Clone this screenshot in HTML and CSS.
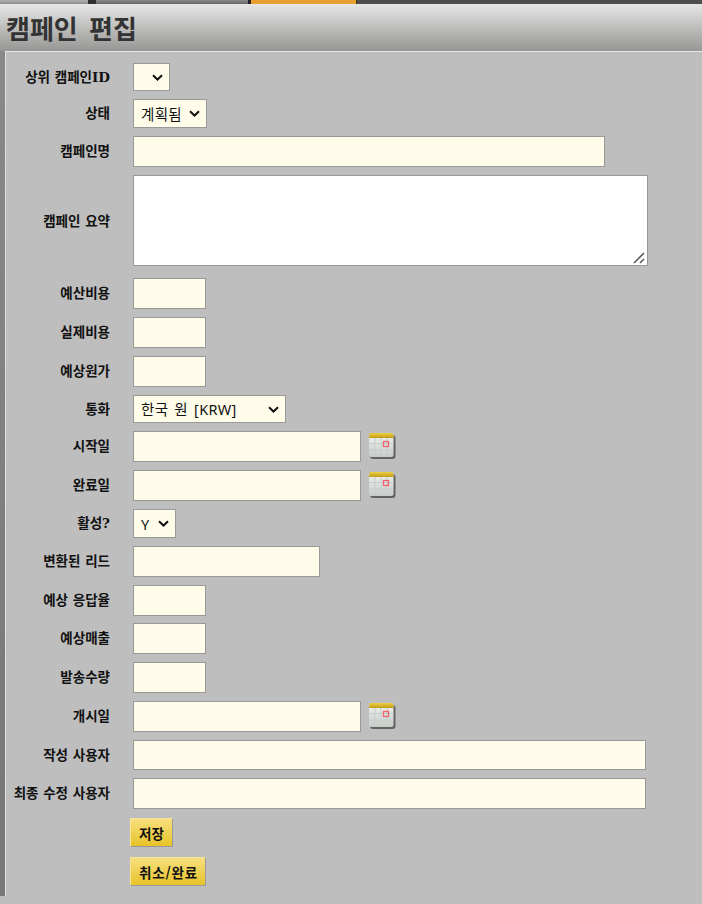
FILE: index.html
```html
<!DOCTYPE html>
<html lang="ko">
<head>
    <meta charset="UTF-8">
    <meta name="viewport" content="width=device-width, initial-scale=1.0">
    <title>캠페인 편집</title>
    <link rel="stylesheet" href="styles.css">
</head>
<body>
    <div id="top-strip">
        <div class="tab tab-first"></div>
        <div class="tab tab-second"></div>
        <div class="tab tab-active"></div>
    </div>
    <h1 id="page-title">캠페인 편집</h1>
    <form id="edit-form">
        <label class="lbl">상위 캠페인ID</label>
        <div class="field"><select class="sel w-37"><option></option></select></div>

        <label class="lbl">상태</label>
        <div class="field"><select class="sel w-74 h-29"><option>계획됨</option></select></div>

        <label class="lbl">캠페인명</label>
        <div class="field"><input class="txt w-472" type="text"></div>

        <label class="lbl lbl-area">캠페인 요약</label>
        <div class="field area-wrap">
            <textarea class="area"></textarea>
            <svg class="grip" viewBox="0 0 12 12"><path d="M1 11 L11 1 M7 11 L11 7" stroke="#5a5a5a" stroke-width="1.6" fill="none"/></svg>
        </div>

        <label class="lbl">예산비용</label>
        <div class="field"><input class="txt w-73" type="text"></div>

        <label class="lbl">실제비용</label>
        <div class="field"><input class="txt w-73" type="text"></div>

        <label class="lbl">예상원가</label>
        <div class="field"><input class="txt w-73" type="text"></div>

        <label class="lbl">통화</label>
        <div class="field"><select class="sel w-153"><option>한국 원 [KRW]</option></select></div>

        <label class="lbl">시작일</label>
        <div class="field">
            <input class="txt w-228" type="text">
            <svg class="cal" viewBox="0 1 28 28"><use href="#cal-icon"></use></svg>
        </div>

        <label class="lbl">완료일</label>
        <div class="field">
            <input class="txt w-228" type="text">
            <svg class="cal" viewBox="0 1 28 28"><use href="#cal-icon"></use></svg>
        </div>

        <label class="lbl">활성?</label>
        <div class="field"><select class="sel w-43 h-29"><option>Y</option></select></div>

        <label class="lbl">변환된 리드</label>
        <div class="field"><input class="txt w-187" type="text"></div>

        <label class="lbl tight">예상 응답율</label>
        <div class="field tight"><input class="txt w-73" type="text"></div>

        <label class="lbl">예상매출</label>
        <div class="field"><input class="txt w-73" type="text"></div>

        <label class="lbl">발송수량</label>
        <div class="field"><input class="txt w-73" type="text"></div>

        <label class="lbl">개시일</label>
        <div class="field">
            <input class="txt w-228" type="text">
            <svg class="cal" viewBox="0 1 28 28"><use href="#cal-icon"></use></svg>
        </div>

        <label class="lbl">작성 사용자</label>
        <div class="field"><input class="txt w-513 h-30" type="text"></div>

        <label class="lbl">최종 수정 사용자</label>
        <div class="field"><input class="txt w-513" type="text"></div>

        <div class="field btn-cell"><button class="btn" type="button">저장</button></div>
        <div class="field btn-cell btn-last"><button class="btn btn-wide h-28" type="button">취소/완료</button></div>
    </form>

    <svg class="defs" width="0" height="0">
        <defs>
            <linearGradient id="cal-top" x1="0" y1="0" x2="0" y2="1">
                <stop offset="0" stop-color="#f0d548"/>
                <stop offset="1" stop-color="#c49c18"/>
            </linearGradient>
            <linearGradient id="cal-body" x1="0" y1="0" x2="0" y2="1">
                <stop offset="0" stop-color="#eef2ef"/>
                <stop offset="1" stop-color="#c8ccc8"/>
            </linearGradient>
            <filter id="cal-blur"><feGaussianBlur stdDeviation="0.7"/></filter>
            <g id="cal-icon">
                <rect x="2" y="3" width="25.5" height="24" rx="3" fill="#4c4d46" opacity="0.8" filter="url(#cal-blur)"/>
                <rect x="1" y="2" width="24.5" height="23" rx="2" fill="url(#cal-body)"/>
                <path d="M1 5 Q1 0.5 4 0.5 H22.5 Q25.5 0.5 25.5 5 V6 H1Z" fill="url(#cal-top)"/>
                <path d="M7 6V25M13 6V25M19 6V25M1 11.5H25.5M1 18H25.5" stroke="#c3ceca" stroke-width="1" fill="none"/>
                <rect x="15.5" y="9.5" width="5" height="5" fill="none" stroke="#f2606e" stroke-width="1.3"/>
            </g>
        </defs>
    </svg>
</body>
</html>
```

FILE: styles.css
```css
html, body{
    margin: 0;
    padding: 0;
    height: 904px;
    overflow: hidden;
}

body{
    background: #bebebe linear-gradient(to bottom, #8a8a88, #777775) no-repeat;
    background-size: 100% 896px;
    font-family: "Noto Sans CJK KR", "Liberation Sans", sans-serif;
}

#top-strip{
    display: flex;
    height: 4px;
    background-color: #4e4e4e;
}

.tab{
    height: 4px;
}

.tab-first{
    width: 88px;
    background: linear-gradient(to bottom, #b0b0b0, #8c8c8c);
    border-right: 8px solid #2e2e2e;
}

.tab-second{
    width: 152px;
    background: linear-gradient(to bottom, #888888, #666666);
    border-right: 3px solid #222222;
}

.tab-active{
    width: 105px;
    background-color: #e8a030;
    border-right: 1px solid #4a3510;
}

#page-title{
    margin: 0;
    height: 47px;
    padding-left: 6px;
    font-size: 26px;
    line-height: 48px;
    font-weight: 700;
    word-spacing: 4px;
    color: #333333;
    background: linear-gradient(to bottom, #e6e6e6, #969694);
    box-sizing: border-box;
}

#edit-form{
    display: grid;
    grid-template-columns: 104px 1fr;
    column-gap: 23px;
    row-gap: 8px;
    align-items: center;
    align-content: start;
    margin-left: 5px;
    height: 845px;
    padding-top: 11px;
    box-sizing: border-box;
    background-color: #bebebe;
    border-top: 1px solid #e8e8e8;
    border-left: 1px solid #e0e0e0;
}

.lbl{
    text-align: right;
    font-size: 13.5px;
    font-weight: 700;
    color: #111111;
    font-family: "DejaVu Serif", "Noto Sans CJK KR", serif;
    padding-bottom: 3px;
}

.lbl-area{
    margin-bottom: 2px;
}

.field{
    display: flex;
    align-items: center;
    gap: 7px;
}

.tight{
    margin-bottom: -1px;
}

.txt, .sel, .area{
    box-sizing: border-box;
    border: 1px solid #999999;
    border-radius: 0;
    background-color: #fffdea;
    font-family: "Noto Sans", "Noto Sans CJK KR", sans-serif;
    font-size: 14.5px;
    color: #111111;
    outline: none;
    margin: 0;
}

.txt{
    height: 31px;
}

.sel{
    appearance: none;
    height: 28px;
    padding: 0 0 0 7px;
    word-spacing: 2px;
    letter-spacing: 0.3px;
    background-image: url("data:image/svg+xml,%3Csvg xmlns='http://www.w3.org/2000/svg' viewBox='0 0 11 7'%3E%3Cpath d='M1 1.2 L5.5 5.5 L10 1.2' stroke='%23111' stroke-width='2' fill='none'/%3E%3C/svg%3E");
    background-repeat: no-repeat;
    background-size: 11px 7px;
    background-position: right 6px center;
}

.h-28{ height: 28px; }
.h-29{ height: 29px; }
.h-30{ height: 30px; }

.area-wrap{
    position: relative;
    width: 515px;
    margin-bottom: 4px;
}

.area{
    display: block;
    width: 515px;
    height: 91px;
    background-color: #ffffff;
    resize: none;
}

.grip{
    position: absolute;
    right: 3px;
    bottom: 2px;
    width: 12px;
    height: 12px;
}

.w-37{ width: 37px; }
.w-43{ width: 43px; }
.w-73{ width: 73px; }
.w-74{ width: 74px; }
.w-153{ width: 153px; }
.w-187{ width: 187px; }
.w-228{ width: 228px; }
.w-472{ width: 472px; }
.w-513{ width: 513px; }

.cal{
    width: 28px;
    height: 28px;
}

.defs{
    position: absolute;
}

.btn-cell{
    grid-column: 2;
    margin-left: -3px;
    margin-top: 1px;
}

.btn-last{
    margin-top: 2px;
}

.btn{
    height: 29px;
    padding: 0 8px;
    border: 1px solid #999999;
    border-top-color: #f5e49a;
    border-left-color: #f5e49a;
    background: linear-gradient(to bottom, #f6e07e, #e8c228);
    font-family: "Noto Sans CJK KR", "Liberation Sans", sans-serif;
    font-size: 13.5px;
    font-weight: 700;
    color: #111111;
}

.btn-wide{
    letter-spacing: 0.8px;
    padding-right: 7px;
}
```
